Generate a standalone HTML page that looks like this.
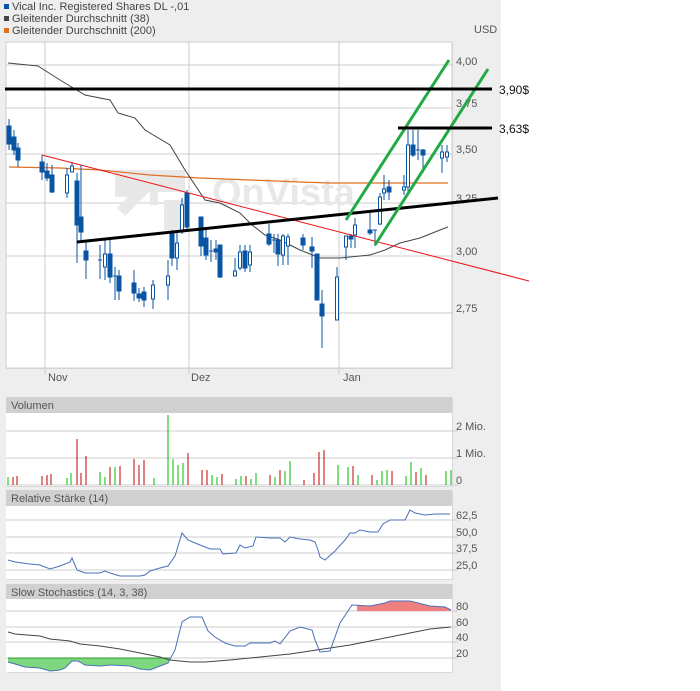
<!DOCTYPE html>
<html><head><meta charset="utf-8"><style>
html,body{margin:0;padding:0;background:#fff;}
svg{display:block;font-family:"Liberation Sans",sans-serif;}
</style></head><body>
<svg width="700" height="691" viewBox="0 0 700 691" xmlns="http://www.w3.org/2000/svg">
<rect x="0" y="0" width="501" height="691" fill="#eeeeee"/>
<rect x="4" y="4" width="5" height="5" fill="#0a54a4"/>
<text x="12" y="10" font-size="11" fill="#444">Vical Inc. Registered Shares DL -,01</text>
<rect x="4" y="16" width="5" height="5" fill="#444"/>
<text x="12" y="22" font-size="11" fill="#444">Gleitender Durchschnitt (38)</text>
<rect x="4" y="28" width="5" height="5" fill="#e07020"/>
<text x="12" y="34" font-size="11" fill="#444">Gleitender Durchschnitt (200)</text>
<text x="474" y="33" font-size="11" fill="#555">USD</text>

<rect x="7" y="43" width="446" height="326" fill="#d8d8d8"/>
<rect x="6" y="42" width="446" height="326" fill="#fff" stroke="#cfcfcf"/>
<g stroke="#cccccc" stroke-width="1" shape-rendering="crispEdges">
<line x1="6" y1="65" x2="452" y2="65"/><line x1="6" y1="108" x2="452" y2="108"/>
<line x1="6" y1="154" x2="452" y2="154"/><line x1="6" y1="203" x2="452" y2="203"/>
<line x1="6" y1="256" x2="452" y2="256"/><line x1="6" y1="313" x2="452" y2="313"/>
<line x1="45" y1="42" x2="45" y2="374"/><line x1="189" y1="42" x2="189" y2="374"/><line x1="339" y1="42" x2="339" y2="374"/>
</g>
<g font-size="11" fill="#555">
<text x="456" y="65">4,00</text><text x="456" y="107">3,75</text><text x="456" y="153">3,50</text>
<text x="456" y="202">3,25</text><text x="456" y="255">3,00</text><text x="456" y="312">2,75</text>
<text x="48" y="381">Nov</text><text x="191" y="381">Dez</text><text x="343" y="381">Jan</text>
</g>
<g fill="#e8e8e8">
<path d="M115 170 h70 v22 h-45 v5 h-25z"/>
<path d="M117 208 l25 -25 h-14 v-8 h30 v30 h-8 v-14 l-25 25z"/>
<rect x="164" y="200" width="20" height="30"/>
<text x="212" y="205" font-size="38" font-weight="bold">OnVista</text>
</g>
<polyline fill="none" stroke="#e07020" stroke-width="1.2" points="9,167 60,168 100,170 150,175 200,178 250,180 300,182 330,183 448,183"/>
<polyline fill="none" stroke="#444" stroke-width="1" points="8,63 38,66 60,80 85,95 110,100 118,113 135,118 145,130 170,145 185,170 205,200 220,203 240,213 252,225 265,235 280,240 300,250 320,258 340,258 370,255 385,250 400,243 420,238 440,230 448,227"/>
<g stroke="#0a54a4" stroke-width="1" fill="#0a54a4" shape-rendering="crispEdges">
<line x1="9" y1="119" x2="9" y2="150"/><rect x="7" y="126" width="4" height="18"/>
<line x1="14" y1="130" x2="14" y2="155"/><rect x="12" y="137" width="4" height="13"/>
<line x1="18" y1="143" x2="18" y2="167"/><rect x="16" y="148" width="4" height="12"/>
<line x1="42" y1="155" x2="42" y2="180"/><rect x="40" y="162" width="4" height="10"/>
<line x1="47" y1="163" x2="47" y2="181"/><rect x="45" y="171" width="4" height="7"/>
<line x1="52" y1="165" x2="52" y2="193"/><rect x="50" y="175" width="4" height="17"/>
<line x1="67" y1="168" x2="67" y2="198"/><rect x="65.5" y="175" width="3" height="18" fill="#fff"/>
<line x1="72" y1="162" x2="72" y2="172"/><rect x="70.5" y="166" width="3" height="6" fill="#fff"/>
<line x1="77" y1="173" x2="77" y2="263"/><rect x="75" y="181" width="4" height="44"/>
<line x1="81" y1="165" x2="81" y2="240"/><rect x="79" y="217" width="4" height="15"/>
<line x1="86" y1="240" x2="86" y2="279"/><rect x="84" y="251" width="4" height="9"/>
<line x1="100" y1="245" x2="100" y2="279"/><line x1="98" y1="260" x2="102" y2="260"/>
<line x1="105" y1="240" x2="105" y2="280"/><rect x="103.5" y="254" width="3" height="13" fill="#fff"/>
<line x1="110" y1="240" x2="110" y2="283"/><rect x="108" y="254" width="4" height="23"/>
<line x1="115" y1="267" x2="115" y2="300"/><line x1="113" y1="276" x2="117" y2="276"/>
<line x1="119" y1="270" x2="119" y2="300"/><rect x="117" y="276" width="4" height="15"/>
<line x1="134" y1="270" x2="134" y2="301"/><rect x="132" y="283" width="4" height="10"/>
<line x1="139" y1="288" x2="139" y2="302"/><rect x="137" y="294" width="4" height="4"/>
<line x1="144" y1="287" x2="144" y2="307"/><rect x="142" y="292" width="4" height="8"/>
<line x1="153" y1="280" x2="153" y2="309"/><rect x="151.5" y="285" width="3" height="14" fill="#fff"/>
<line x1="168" y1="260" x2="168" y2="300"/><rect x="166.5" y="276" width="3" height="9" fill="#fff"/>
<line x1="172" y1="230" x2="172" y2="266"/><rect x="170" y="233" width="4" height="25"/>
<line x1="177" y1="233" x2="177" y2="270"/><rect x="175.5" y="243" width="3" height="15" fill="#fff"/>
<line x1="182" y1="198" x2="182" y2="234"/><rect x="180.5" y="205" width="3" height="27" fill="#fff"/>
<line x1="187" y1="190" x2="187" y2="232"/><rect x="185" y="193" width="4" height="34"/>
<line x1="201" y1="217" x2="201" y2="256"/><rect x="199" y="217" width="4" height="29"/>
<line x1="206" y1="228" x2="206" y2="260"/><rect x="204" y="238" width="4" height="17"/>
<line x1="211" y1="240" x2="211" y2="262"/><line x1="209" y1="251" x2="213" y2="251"/>
<line x1="216" y1="240" x2="216" y2="260"/><rect x="214" y="249" width="4" height="3"/>
<line x1="220" y1="245" x2="220" y2="278"/><rect x="218" y="245" width="4" height="32"/>
<line x1="235" y1="258" x2="235" y2="276"/><rect x="233.5" y="271" width="3" height="5" fill="#fff"/>
<line x1="240" y1="245" x2="240" y2="270"/><rect x="238.5" y="252" width="3" height="16" fill="#fff"/>
<line x1="245" y1="245" x2="245" y2="272"/><rect x="243" y="251" width="4" height="17"/>
<line x1="250" y1="245" x2="250" y2="272"/><rect x="248.5" y="252" width="3" height="13" fill="#fff"/>
<line x1="269" y1="224" x2="269" y2="246"/><rect x="267" y="234" width="4" height="10"/>
<line x1="274" y1="234" x2="274" y2="253"/><line x1="272" y1="240" x2="276" y2="240"/>
<line x1="278" y1="234" x2="278" y2="266"/><rect x="276" y="240" width="4" height="14"/>
<line x1="283" y1="234" x2="283" y2="265"/><rect x="281.5" y="236" width="3" height="19" fill="#fff"/>
<line x1="288" y1="234" x2="288" y2="265"/><rect x="286.5" y="237" width="3" height="9" fill="#fff"/>
<line x1="303" y1="234" x2="303" y2="250"/><rect x="301" y="238" width="4" height="7"/>
<line x1="312" y1="237" x2="312" y2="268"/><rect x="310" y="247" width="4" height="4"/>
<line x1="317" y1="254" x2="317" y2="300"/><rect x="315" y="254" width="4" height="46"/>
<line x1="322" y1="290" x2="322" y2="348"/><rect x="320" y="304" width="4" height="12"/>
<line x1="337" y1="267" x2="337" y2="320"/><rect x="335.5" y="277" width="3" height="43" fill="#fff"/>
<line x1="346" y1="237" x2="346" y2="260"/><rect x="344.5" y="236" width="3" height="11" fill="#fff"/>
<line x1="351" y1="234" x2="351" y2="248"/><rect x="349" y="236" width="4" height="3"/>
<line x1="355" y1="218" x2="355" y2="248"/><rect x="353.5" y="225" width="3" height="10" fill="#fff"/>
<line x1="370" y1="213" x2="370" y2="235"/><rect x="368" y="230" width="4" height="3"/>
<line x1="375" y1="230" x2="375" y2="246"/><line x1="373" y1="230" x2="377" y2="230"/>
<line x1="380" y1="193" x2="380" y2="225"/><rect x="378.5" y="197" width="3" height="27" fill="#fff"/>
<line x1="384" y1="175" x2="384" y2="200"/><rect x="382.5" y="189" width="3" height="4" fill="#fff"/>
<line x1="389" y1="180" x2="389" y2="200"/><rect x="387" y="187" width="4" height="5"/>
<line x1="404" y1="175" x2="404" y2="195"/><rect x="402.5" y="187" width="3" height="3" fill="#fff"/>
<line x1="408" y1="130" x2="408" y2="195"/><rect x="406.5" y="145" width="3" height="42" fill="#fff"/>
<line x1="413" y1="130" x2="413" y2="157"/><rect x="411" y="145" width="4" height="10"/>
<line x1="418" y1="130" x2="418" y2="160"/><line x1="416" y1="150" x2="420" y2="150"/>
<line x1="423" y1="149" x2="423" y2="173"/><rect x="421" y="150" width="4" height="5"/>
<line x1="442" y1="145" x2="442" y2="173"/><rect x="440.5" y="152" width="3" height="6" fill="#fff"/>
<line x1="447" y1="145" x2="447" y2="162"/><rect x="445.5" y="152" width="3" height="5" fill="#fff"/>
</g>
<line x1="42" y1="155" x2="529" y2="281" stroke="#ee1111" stroke-width="1"/>
<line x1="77" y1="242" x2="498" y2="198" stroke="#000" stroke-width="3"/>
<line x1="346" y1="220" x2="449" y2="60" stroke="#22aa44" stroke-width="3"/>
<line x1="375" y1="245" x2="488" y2="69" stroke="#22aa44" stroke-width="3"/>
<line x1="5" y1="89" x2="492" y2="89" stroke="#000" stroke-width="3"/>
<line x1="398" y1="128" x2="492" y2="128" stroke="#000" stroke-width="3"/>
<text x="499" y="94" font-size="12" fill="#111">3,90$</text>
<text x="499" y="133" font-size="12" fill="#111">3,63$</text>

<rect x="7" y="398" width="446" height="89" fill="#d8d8d8"/>
<rect x="6" y="397" width="446" height="16" fill="#d0d0d0"/>
<text x="11" y="409" font-size="11" fill="#555">Volumen</text>
<rect x="6" y="413" width="446" height="73" fill="#fff"/>
<g stroke="#cccccc" shape-rendering="crispEdges"><line x1="6" y1="431" x2="458" y2="431"/><line x1="6" y1="458" x2="458" y2="458"/><line x1="6" y1="485" x2="458" y2="485"/></g>
<g font-size="11" fill="#555"><text x="456" y="430">2 Mio.</text><text x="456" y="457">1 Mio.</text><text x="456" y="484">0</text></g>
<g stroke-width="1" shape-rendering="crispEdges">
<g stroke="#00bb00"><path d="M8 485V477M67 485V478M71 485V473M100 485V472M105 485V477M115 485V467M154 485V478M168 485V415M173 485V459M178 485V465M183 485V463M212 485V475M217 485V477M236 485V479M241 485V476M251 485V479M256 485V473M275 485V477M285 485V471M290 485V461M338 485V465M348 485V467M358 485V475M377 485V480M382 485V471M387 485V470M406 485V476M411 485V462M421 485V468M446 485V471M451 485V470"/></g>
<g stroke="#c00000"><path d="M13 485V477M17 485V476M42 485V476M47 485V475M51 485V474M77 485V439M81 485V473M86 485V456M110 485V467M120 485V466M134 485V459M139 485V465M144 485V460M188 485V453M202 485V470M207 485V470M222 485V474M246 485V476M270 485V475M280 485V470M304 485V480M314 485V473M319 485V452M324 485V450M353 485V466M372 485V475M392 485V471M416 485V472M426 485V475"/></g>
</g>

<rect x="7" y="491" width="446" height="89" fill="#d8d8d8"/>
<rect x="6" y="490" width="446" height="16" fill="#d0d0d0"/>
<text x="11" y="502" font-size="11" fill="#555">Relative Stärke (14)</text>
<rect x="6" y="506" width="446" height="73" fill="#fff"/>
<g stroke="#cccccc" shape-rendering="crispEdges"><line x1="6" y1="520" x2="458" y2="520"/><line x1="6" y1="537" x2="458" y2="537"/><line x1="6" y1="553" x2="458" y2="553"/><line x1="6" y1="570" x2="458" y2="570"/></g>
<g font-size="11" fill="#555"><text x="456" y="519">62,5</text><text x="456" y="536">50,0</text><text x="456" y="552">37,5</text><text x="456" y="569">25,0</text></g>
<polyline fill="none" stroke="#4a70b8" stroke-width="1" points="8,560 15,562 30,564 40,565 50,569 60,566 70,562 72,558 77,570 85,573 100,573 105,571 110,573 120,576 140,576 145,575 150,571 160,568 168,566 175,556 182,533 188,540 200,545 210,549 220,549 223,554 236,553 240,545 245,548 253,546 256,537 270,538 280,538 285,542 290,537 300,539 310,540 315,542 318,550 320,557 325,560 335,551 345,540 350,533 355,533 360,530 370,532 378,532 383,524 390,520 405,520 410,510 415,513 425,515 435,514 450,514"/>

<rect x="7" y="585" width="446" height="88" fill="#d8d8d8"/>
<rect x="6" y="584" width="446" height="15" fill="#d0d0d0"/>
<text x="11" y="596" font-size="11" fill="#555">Slow Stochastics (14, 3, 38)</text>
<rect x="6" y="599" width="446" height="73" fill="#fff"/>
<g stroke="#cccccc" shape-rendering="crispEdges"><line x1="6" y1="611" x2="458" y2="611"/><line x1="6" y1="627" x2="458" y2="627"/><line x1="6" y1="642" x2="458" y2="642"/><line x1="6" y1="658" x2="458" y2="658"/></g>
<g font-size="11" fill="#555"><text x="456" y="610">80</text><text x="456" y="626">60</text><text x="456" y="641">40</text><text x="456" y="657">20</text></g>
<polygon fill="#7ed87e" points="8,658 8,662 15,664 25,667 40,668 50,671 60,670 65,668 72,661 78,661 85,665 100,666 110,665 130,666 140,669 150,670 160,666 168,663 170,658"/>
<line x1="8" y1="658" x2="170" y2="658" stroke="#339933"/>
<polygon fill="#f08080" points="357,611 357,605 370,606 385,603 390,601 410,601 430,606 445,607 451,610 451,611"/>
<polyline fill="none" stroke="#444" stroke-width="1" points="8,632 15,634 40,636 50,639 70,641 80,644 100,646 120,649 135,652 145,654 160,657 170,660 190,662 205,662 230,660 250,658 270,656 290,654 310,651 330,648 350,645 370,641 390,637 410,633 430,629 451,627"/>
<polyline fill="none" stroke="#4a70b8" stroke-width="1" points="8,662 15,664 25,667 40,668 50,671 60,670 65,668 72,661 78,661 85,665 100,666 110,665 130,666 140,669 150,670 160,666 168,663 175,650 182,622 190,617 202,617 208,631 215,637 225,643 235,646 245,646 250,643 258,643 270,643 275,641 280,644 290,631 300,627 312,630 315,640 320,652 330,651 340,623 352,605 370,606 385,603 390,601 410,601 430,606 445,607 451,610"/>
</svg>
</body></html>
